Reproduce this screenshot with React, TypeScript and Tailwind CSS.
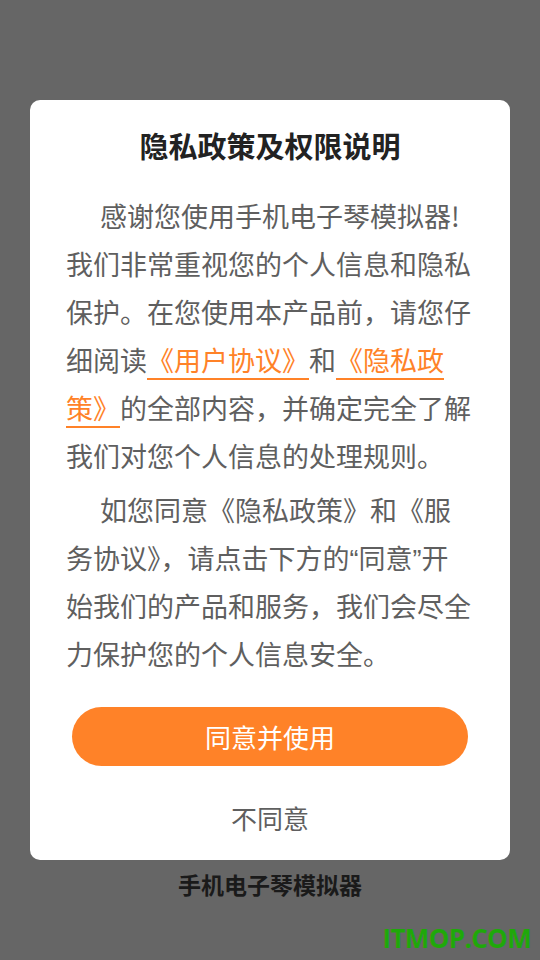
import React from 'react';

const App: React.FC = () => {
  const font = { fontFamily: '"Noto Sans CJK SC", "Noto Sans", sans-serif' };
  const latin = { fontFamily: '"Liberation Sans", sans-serif' };
  const link = 'text-[#ff8228] underline underline-offset-[7px] decoration-[#ff8228] decoration-[1.5px]';
  return (
    <div className="relative min-h-screen w-full bg-[#666666] flex flex-col items-center pt-[100px]" style={font}>
      <div className="w-[480px] rounded-[10px] bg-white pt-[25px] pb-[18px] flex flex-col">
        <h1 className="text-center text-[29px] leading-[40px] font-bold text-[#222222]">隐私政策及权限说明</h1>
        <div className="mt-[27px] px-[36px] text-[27px] leading-[48px] text-[#5f5f5f]">
          <p className="indent-[34px]">
            感谢您使用手机电子琴模拟器!我们非常重视您的个人信息和隐私保护。在您使用本产品前，请您仔细阅读
            <span className={link}>《用户协议》</span>和
            <span className={link}>《隐私政策》</span>
            的全部内容，并确定完全了解我们对您个人信息的处理规则。
          </p>
          <p className="mt-[6px] indent-[34px]">
            如您同意《隐私政策》和《服务协议》，请点击下方的<span className="leading-none" style={latin}>“</span>同意<span className="leading-none" style={latin}>”</span>开始我们的产品和服务，我们会尽全力保护您的个人信息安全。
          </p>
        </div>
        <button className="mx-auto mt-[29px] w-[396px] h-[59px] rounded-full bg-[#ff8228] text-white text-[26px]">
          同意并使用
        </button>
        <div className="mt-[28px] text-center text-[26px] leading-[48px] text-[#5f5f5f]">不同意</div>
      </div>
      <div className="mt-[8px] text-[23px] leading-[32px] font-bold text-[#1a1a1a]">手机电子琴模拟器</div>
      <div className="absolute right-[9px] bottom-[9px] text-[26px] font-bold leading-none text-[#1fa80a] tracking-tight" style={{ fontFamily: '"Open Sans", sans-serif' }}>
        ITMOP.COM
      </div>
    </div>
  );
};

export default App;
